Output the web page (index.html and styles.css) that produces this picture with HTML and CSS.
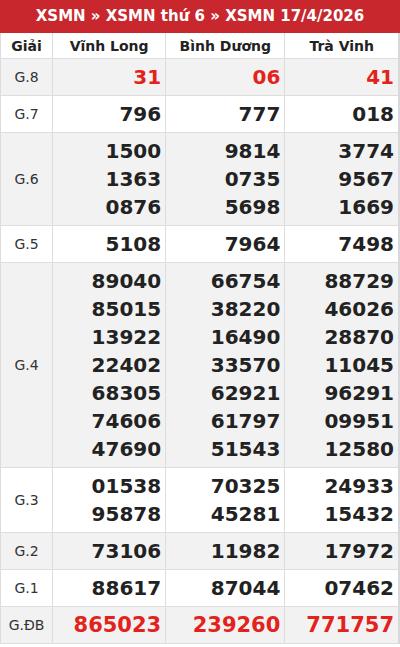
FILE: index.html
```html
<!DOCTYPE html>
<html lang="vi">
<head>
<meta charset="utf-8">
<link rel="stylesheet" href="styles.css">
</head>
<body>
<div class="box">
  <h2 class="title">XSMN » XSMN thứ 6 » XSMN 17/4/2026</h2>
  <table class="kq">
    <colgroup>
      <col class="c-giai"><col class="c-1"><col class="c-2"><col class="c-3">
    </colgroup>
    <thead>
      <tr><th>Giải</th><th>Vĩnh Long</th><th>Bình Dương</th><th>Trà Vinh</th></tr>
    </thead>
    <tbody>
      <tr class="alt"><td class="g">G.8</td><td class="n red">31</td><td class="n red">06</td><td class="n red">41</td></tr>
      <tr><td class="g">G.7</td><td class="n">796</td><td class="n">777</td><td class="n">018</td></tr>
      <tr class="alt"><td class="g">G.6</td><td class="n">1500<br>1363<br>0876</td><td class="n">9814<br>0735<br>5698</td><td class="n">3774<br>9567<br>1669</td></tr>
      <tr><td class="g">G.5</td><td class="n">5108</td><td class="n">7964</td><td class="n">7498</td></tr>
      <tr class="alt"><td class="g">G.4</td><td class="n">89040<br>85015<br>13922<br>22402<br>68305<br>74606<br>47690</td><td class="n">66754<br>38220<br>16490<br>33570<br>62921<br>61797<br>51543</td><td class="n">88729<br>46026<br>28870<br>11045<br>96291<br>09951<br>12580</td></tr>
      <tr><td class="g">G.3</td><td class="n">01538<br>95878</td><td class="n">70325<br>45281</td><td class="n">24933<br>15432</td></tr>
      <tr class="alt"><td class="g">G.2</td><td class="n">73106</td><td class="n">11982</td><td class="n">17972</td></tr>
      <tr><td class="g">G.1</td><td class="n">88617</td><td class="n">87044</td><td class="n">07462</td></tr>
      <tr class="alt"><td class="g">G.ĐB</td><td class="n red db">865023</td><td class="n red db">239260</td><td class="n red db">771757</td></tr>
    </tbody>
  </table>
</div>
</body>
</html>
```

FILE: styles.css
```css
html, body {
  margin: 0;
  padding: 0;
  background: #ffffff;
}
body {
  font-family: "DejaVu Sans", "Liberation Sans", sans-serif;
  color: #222;
}
.box {
  width: 400px;
}
.title {
  margin: 0;
  height: 33px;
  line-height: 33px;
  background: #c8272e;
  color: #fff;
  font-size: 15px;
  font-weight: bold;
  text-align: center;
}
.kq {
  width: 400px;
  border-collapse: collapse;
  table-layout: fixed;
  border-left: 1px solid #d8d8dc;
  border-right: 2px solid #d8d8dc;
}
.c-giai { width: 52px; }
.c-1 { width: 113px; }
.c-2 { width: 119px; }
.c-3 { width: 114px; }
.kq th {
  height: 25px;
  padding: 0;
  font-size: 14px;
  font-weight: bold;
  color: #222;
  border: 1px solid #ddd;
  border-top: none;
  text-align: center;
  background: #fff;
}
.kq td {
  border: 1px solid #ddd;
  padding: 4px 4px 4px 0;
  vertical-align: middle;
}
.kq tr.alt td { background: #f2f2f2; }
.g {
  text-align: center;
  font-size: 14px;
  color: #333;
  padding: 4px 0 !important;
}
.n {
  text-align: right;
  font-size: 20px;
  font-weight: bold;
  line-height: 28px;
  color: #222;
}
.n.red { color: #e3231b; }
.n.db { font-size: 21px; }
```
